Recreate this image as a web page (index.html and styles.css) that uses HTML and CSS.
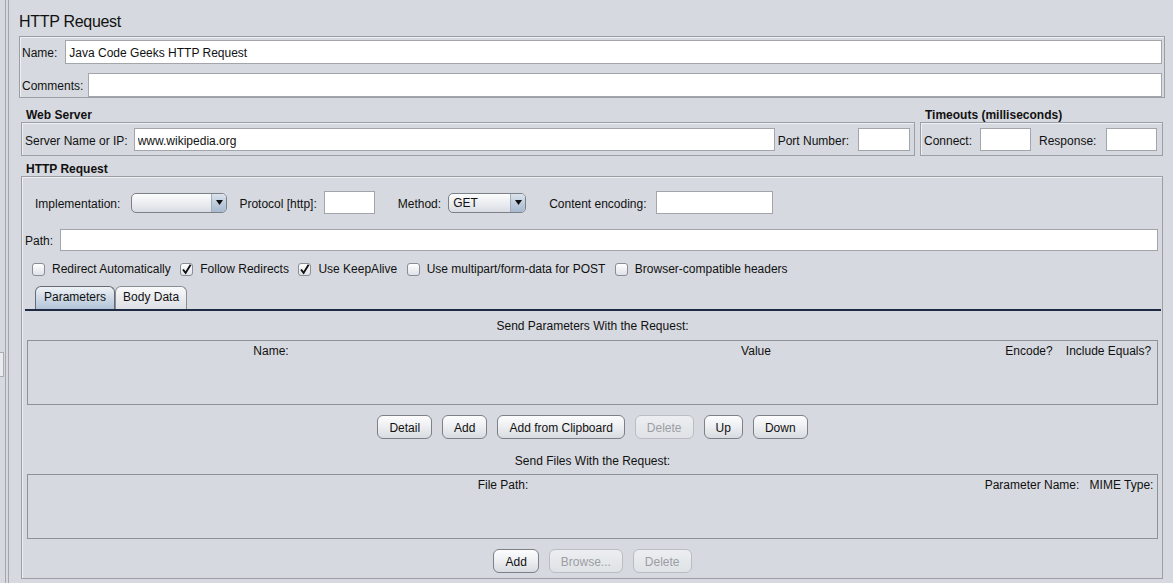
FILE: index.html
```html
<!DOCTYPE html>
<html lang="en">
<head>
  <meta charset="UTF-8">
  <title>HTTP Request</title>
  <link rel="stylesheet" href="styles.css">
</head>
<body>
  <div class="app">
    <div class="gutter"><div class="grip"></div></div>

    <div class="main">
      <div class="title">HTTP Request</div>

      <div class="box name-box">
        <div class="row">
          <label class="name-label">Name:</label>
          <input class="field grow" value="Java Code Geeks HTTP Request">
        </div>
        <div class="row">
          <label class="comments-label">Comments:</label>
          <input class="field grow">
        </div>
      </div>

      <div class="server-row">
        <section class="group web-server">
          <h2>Web Server</h2>
          <div class="box group-body">
            <label>Server Name or IP:</label>
            <input class="field server-field" value="www.wikipedia.org">
            <label class="port-label">Port Number:</label>
            <input class="field port-field">
          </div>
        </section>
        <section class="group timeouts">
          <h2>Timeouts (milliseconds)</h2>
          <div class="box group-body">
            <label>Connect:</label>
            <input class="field small-field connect-field">
            <label class="response-label">Response:</label>
            <input class="field small-field response-field">
          </div>
        </section>
      </div>

      <section class="group http-group">
        <h2>HTTP Request</h2>
        <div class="box http-body">
          <div class="impl-row">
            <label>Implementation:</label>
            <div class="combo impl-combo">
              <span class="combo-text"></span>
              <span class="combo-arrow"><svg width="7" height="5" viewBox="0 0 7 5"><path d="M0 0h7L3.5 5z"/></svg></span>
            </div>
            <label class="after-combo">Protocol [http]:</label>
            <input class="field protocol-field">
            <label class="after-field">Method:</label>
            <div class="combo method-combo">
              <span class="combo-text">GET</span>
              <span class="combo-arrow"><svg width="7" height="5" viewBox="0 0 7 5"><path d="M0 0h7L3.5 5z"/></svg></span>
            </div>
            <label class="after-field">Content encoding:</label>
            <input class="field encoding-field">
          </div>

          <div class="path-row">
            <label>Path:</label>
            <input class="field path-field">
          </div>

          <div class="check-row">
            <label class="check"><span class="check-box"></span>Redirect Automatically</label>
            <label class="check"><span class="check-box"><svg width="13" height="13" viewBox="0 0 13 13"><path d="M3 6.5l2.6 3.4L10.6 1.8"/></svg></span>Follow Redirects</label>
            <label class="check"><span class="check-box"><svg width="13" height="13" viewBox="0 0 13 13"><path d="M3 6.5l2.6 3.4L10.6 1.8"/></svg></span>Use KeepAlive</label>
            <label class="check"><span class="check-box"></span>Use multipart/form-data for POST</label>
            <label class="check"><span class="check-box"></span>Browser-compatible headers</label>
          </div>

          <div class="tabs">
            <div class="tab selected">Parameters</div>
            <div class="tab">Body Data</div>
          </div>

          <div class="tab-pane">
            <div class="pane-title">Send Parameters With the Request:</div>
            <div class="table params-table">
              <div>Name:</div>
              <div>Value</div>
              <div>Encode?</div>
              <div>Include Equals?</div>
            </div>
            <div class="buttons">
              <button>Detail</button>
              <button>Add</button>
              <button>Add from Clipboard</button>
              <button disabled>Delete</button>
              <button>Up</button>
              <button>Down</button>
            </div>

            <div class="pane-title files-title">Send Files With the Request:</div>
            <div class="table files-table">
              <div>File Path:</div>
              <div>Parameter Name:</div>
              <div>MIME Type:</div>
            </div>
            <div class="buttons">
              <button>Add</button>
              <button disabled>Browse...</button>
              <button disabled>Delete</button>
            </div>
          </div>
        </div>
      </section>
    </div>
  </div>
</body>
</html>
```

FILE: styles.css
```css
* {
  box-sizing: border-box;
}

body {
  margin: 0;
  background-color: #d6d9df;
  color: #111;
  font-family: "Liberation Sans", Arial, sans-serif;
  font-size: 12px;
  line-height: 14px;
  overflow: hidden;
}

.app {
  display: flex;
  height: 583px;
}

/* left split pane edge */
.gutter {
  width: 19px;
  flex: none;
  padding-top: 352px;
  background: linear-gradient(to right,
    transparent 5px, #a3a6ab 5px, #a3a6ab 6px, transparent 6px,
    transparent 8px, #a3a6ab 8px, #a3a6ab 9px, transparent 9px);
}

.grip {
  width: 4px;
  height: 25px;
  background-color: #e9ebee;
  border: 1px solid #a9acb1;
  border-left: 0;
}

.main {
  flex: 1;
  padding-right: 8px;
}

.title {
  font-size: 16px;
  line-height: 20px;
  letter-spacing: -0.3px;
  padding-top: 12px;
  margin-bottom: 4px;
}

.box {
  border: 1px solid #9b9ea3;
  box-shadow: inset 1px 1px 0 #eef0f3;
}

.row {
  display: flex;
  align-items: center;
}

label {
  white-space: nowrap;
  padding-top: 2px;
}

.field {
  appearance: none;
  height: 23px;
  margin: 0;
  padding: 2px 3px 0;
  border: 1px solid #a2a5aa;
  border-radius: 0;
  background-color: #fff;
  color: #111;
  font: inherit;
  outline: none;
}

.grow {
  flex: 1;
}

/* name / comments */
.name-box {
  display: flex;
  flex-direction: column;
  gap: 9px;
  height: 62px;
  padding: 3px 2px 0;
}

.name-box .field {
  height: 24px;
}

.name-label {
  margin-right: 8px;
}

.comments-label {
  margin-right: 5px;
}

/* web server + timeouts */
.server-row {
  display: flex;
  gap: 5px;
  margin: 8px 2px 0;
}

.group h2 {
  margin: 0 0 0 5px;
  padding-top: 2px;
  font-size: 12px;
  font-weight: bold;
  line-height: 14px;
}

.web-server {
  flex: 1;
}

.timeouts {
  width: 243px;
}

.group-body {
  display: flex;
  align-items: center;
  height: 34px;
  padding: 1px 4px 0 3px;
}

.server-field {
  flex: 1;
  margin: 0 3px 0 6px;
}

.port-label {
  margin-right: 9px;
}

.port-field {
  width: 52px;
}

.small-field {
  width: 51px;
}

.connect-field {
  margin-left: 8px;
}

.response-label {
  margin: 0 10px 0 8px;
}

/* http request */
.http-group {
  margin: 4px 2px 0;
}

.http-body {
  height: 403px;
  padding: 14px 0 5px;
}

.impl-row {
  display: flex;
  align-items: center;
  height: 23px;
  padding-left: 13px;
}

.impl-row .combo {
  margin-left: 11px;
}

.impl-row .method-combo {
  margin-left: 7px;
}

.after-combo {
  margin: 0 7px 0 12px;
}

.after-field {
  margin-left: 23px;
}

.protocol-field {
  width: 51px;
}

.encoding-field {
  width: 117px;
  margin-left: 9px;
}

.combo {
  display: flex;
  height: 20px;
  border: 1px solid #7c8087;
  border-radius: 5px;
  overflow: hidden;
  background: linear-gradient(#fcfdfd, #e9ecf0 55%, #d9dde3);
}

.impl-combo {
  width: 96px;
}

.method-combo {
  width: 78px;
}

.combo-text {
  flex: 1;
  padding: 1px 0 0 4px;
  line-height: 17px;
}

.combo-arrow {
  display: flex;
  align-items: center;
  justify-content: center;
  width: 15px;
  border-left: 1px solid #a4adb8;
  background: linear-gradient(#dbe4ee, #bccadb 55%, #a9bbd0);
}

.combo-arrow svg {
  fill: #111;
}

.path-row {
  display: flex;
  align-items: center;
  margin-top: 15px;
  padding: 0 4px 0 3px;
}

.path-field {
  flex: 1;
  height: 22px;
  margin-left: 7px;
}

.check-row {
  display: flex;
  align-items: center;
  height: 18px;
  margin-top: 8px;
  padding-left: 10px;
}

.check {
  display: flex;
  align-items: center;
  margin-right: 9.5px;
}

.check-box {
  display: flex;
  width: 13px;
  height: 13px;
  margin-right: 7px;
  border: 1px solid #8a8d93;
  border-radius: 3px;
  background: linear-gradient(#ffffff, #eef0f3 50%, #dfe2e7);
}

.check-box svg {
  margin: -1px;
  fill: none;
  stroke: #111;
  stroke-width: 1.9;
}

/* tabs */
.tabs {
  display: flex;
  align-items: flex-end;
  height: 25px;
  margin: 9px 1px 0 3px;
  padding-left: 10px;
  border-bottom: 2px solid #1e2a44;
}

.tab {
  height: 23px;
  padding: 0 7px;
  line-height: 21px;
  border: 1px solid #8a8d92;
  border-bottom: 0;
  border-radius: 6px 6px 0 0;
  background: linear-gradient(#f8f9fa, #e7e9ed 60%, #dcdfe4);
}

.tab.selected {
  padding: 0 8px;
  border-color: #666b73;
  background: linear-gradient(#eef2f6, #c9d5e3 60%, #b3c4d8);
}

.tab-pane {
  padding: 7px 4px 0 5px;
}

.pane-title {
  padding-top: 1px;
  text-align: center;
  line-height: 14px;
}

.files-title {
  margin-top: 14px;
}

.table {
  display: grid;
  height: 65px;
  margin-top: 7px;
  padding-top: 3px;
  border: 1px solid #8e9196;
  align-content: start;
  text-align: center;
}

.params-table {
  grid-template-columns: 486px 484px 62px 1fr;
}

.files-table {
  margin-top: 6px;
  grid-template-columns: 950px 108px 1fr;
}

.buttons {
  display: flex;
  justify-content: center;
  gap: 10px;
  margin-top: 10px;
}

button {
  height: 24px;
  margin: 0;
  padding: 2px 11px 0;
  border: 1px solid #7c8087;
  border-radius: 6px;
  background: linear-gradient(#fdfdfe, #eceef1 50%, #d8dbe0);
  color: #111;
  font: inherit;
}

button:disabled {
  border-color: #babdc2;
  background: linear-gradient(#eceef1, #dfe2e6);
  color: #9b9ea4;
}
```
